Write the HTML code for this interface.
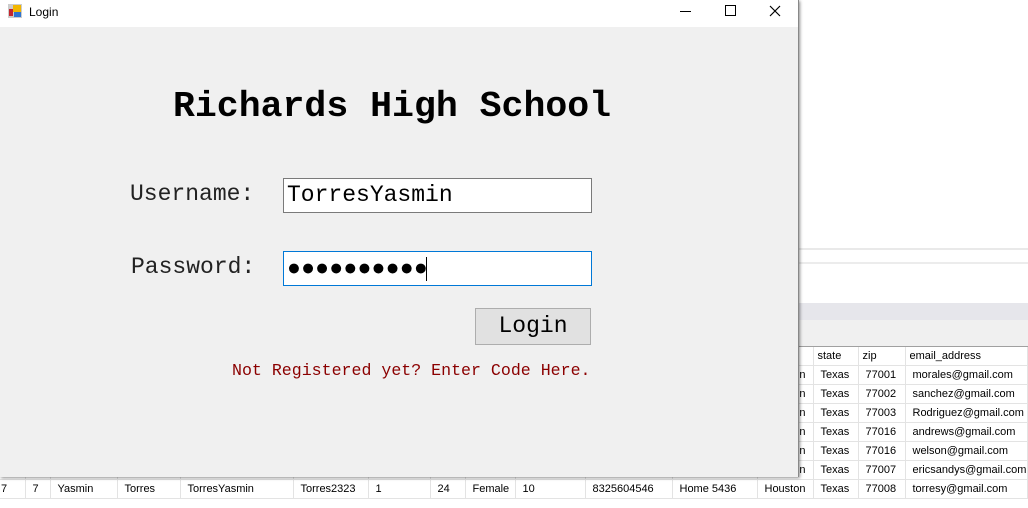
<!DOCTYPE html>
<html><head><style>
body{margin:0;width:1028px;height:508px;background:#fff;position:relative;overflow:hidden;font-family:"Liberation Sans",sans-serif}
.a{position:absolute}
.mono{font-family:"Liberation Mono",monospace}
table{border-collapse:collapse;font-size:11px}
td{border-right:1px solid #e3e3e3;border-bottom:1px solid #e3e3e3;height:18px;padding:0 0 0 7px;white-space:nowrap;overflow:hidden}
</style></head><body>
<div class="a" style="left:798px;top:248px;width:230px;height:2px;background:#e9e9e9"></div>
<div class="a" style="left:798px;top:262px;width:230px;height:2px;background:#ececec"></div>
<div class="a" style="left:798px;top:303px;width:230px;height:17px;background:#e6e6eb"></div>
<div class="a" style="left:798px;top:320px;width:230px;height:26px;background:#f0f0f0"></div>
<div class="a" style="left:798px;top:346px;width:230px;height:1px;background:#a0a0a0"></div>
<table class="a" style="left:0;top:347px;width:1028px;table-layout:fixed">
<colgroup><col style="width:25px"><col style="width:25px"><col style="width:67px"><col style="width:63px"><col style="width:113px"><col style="width:75px"><col style="width:62px"><col style="width:35px"><col style="width:50px"><col style="width:70px"><col style="width:87px"><col style="width:85px"><col style="width:56px"><col style="width:45px"><col style="width:47px"><col></colgroup>
<tr><td></td><td></td><td></td><td></td><td></td><td></td><td></td><td></td><td></td><td></td><td></td><td></td><td></td><td style="padding-left:4px">state</td><td style="padding-left:4px">zip</td><td style="padding-left:4px">email_address</td></tr>
<tr><td></td><td></td><td></td><td></td><td></td><td></td><td></td><td></td><td></td><td></td><td></td><td></td><td>Houston</td><td>Texas</td><td>77001</td><td>morales@gmail.com</td></tr>
<tr><td></td><td></td><td></td><td></td><td></td><td></td><td></td><td></td><td></td><td></td><td></td><td></td><td>Houston</td><td>Texas</td><td>77002</td><td>sanchez@gmail.com</td></tr>
<tr><td></td><td></td><td></td><td></td><td></td><td></td><td></td><td></td><td></td><td></td><td></td><td></td><td>Houston</td><td>Texas</td><td>77003</td><td>Rodriguez@gmail.com</td></tr>
<tr><td></td><td></td><td></td><td></td><td></td><td></td><td></td><td></td><td></td><td></td><td></td><td></td><td>Houston</td><td>Texas</td><td>77016</td><td>andrews@gmail.com</td></tr>
<tr><td></td><td></td><td></td><td></td><td></td><td></td><td></td><td></td><td></td><td></td><td></td><td></td><td>Houston</td><td>Texas</td><td>77016</td><td>welson@gmail.com</td></tr>
<tr><td></td><td></td><td></td><td></td><td></td><td></td><td></td><td></td><td></td><td></td><td></td><td></td><td>Houston</td><td>Texas</td><td>77007</td><td>ericsandys@gmail.com</td></tr>
<tr><td style="padding-left:1px">7</td><td>7</td><td>Yasmin</td><td>Torres</td><td>TorresYasmin</td><td>Torres2323</td><td>1</td><td>24</td><td>Female</td><td>10</td><td>8325604546</td><td>Home 5436</td><td>Houston</td><td>Texas</td><td>77008</td><td>torresy@gmail.com</td></tr>
</table>
<!-- window -->
<div class="a" style="left:0;top:0;width:798px;height:477px;background:#f0f0f0;box-shadow:1px 1px 3px rgba(0,0,0,.45);border-right:1px solid #888"></div>
<div class="a" style="left:0;top:0;width:798px;height:27px;background:#fff"></div>
<svg class="a" style="left:8px;top:4px" width="14" height="14"><rect x="0" y="0" width="14" height="14" fill="#ccc"/><rect x="5" y="1" width="8" height="7" fill="#f2b600"/><rect x="1" y="5" width="4" height="7" fill="#c4262e"/><rect x="6" y="8" width="7" height="5" fill="#2f74d0"/></svg>
<div class="a" style="left:29px;top:5px;font-size:12px;font-family:'Liberation Sans',sans-serif">Login</div>
<div class="a" style="left:680px;top:11px;width:11px;height:1px;background:#000"></div>
<div class="a" style="left:725px;top:5px;width:9px;height:9px;border:1px solid #000"></div>
<svg class="a" style="left:769px;top:5px" width="12" height="12"><path d="M1 1L11 11M11 1L1 11" stroke="#000" stroke-width="1.2"/></svg>
<div class="a mono" style="left:173px;top:86px;font-size:36.5px;font-weight:bold;line-height:42px">Richards High School</div>
<div class="a mono" style="left:130px;top:180px;font-size:23px;line-height:28px;color:#222">Username:</div>
<div class="a mono" style="left:131px;top:253px;font-size:23px;line-height:28px;color:#222">Password:</div>
<div class="a" style="left:283px;top:178px;width:307px;height:33px;background:#fff;border:1px solid #7a7a7a"></div>
<div class="a mono" style="left:287px;top:181px;font-size:23px;line-height:28px">TorresYasmin</div>
<div class="a" style="left:283px;top:251px;width:307px;height:33px;background:#fff;border:1px solid #0078d7"></div>
<div class="a" style="left:287px;top:253px;font-size:23px;line-height:28px;letter-spacing:0.2px">●●●●●●●●●●</div>
<div class="a" style="left:426px;top:257px;width:1px;height:24px;background:#000"></div>
<div class="a" style="left:475px;top:308px;width:114px;height:35px;background:#e1e1e1;border:1px solid #adadad"></div>
<div class="a mono" style="left:475px;top:312px;width:116px;text-align:center;font-size:23px;line-height:28px">Login</div>
<div class="a mono" style="left:232px;top:361px;font-size:16.6px;line-height:20px;color:#8b0000">Not Registered yet? Enter Code Here.</div>
</body></html>
